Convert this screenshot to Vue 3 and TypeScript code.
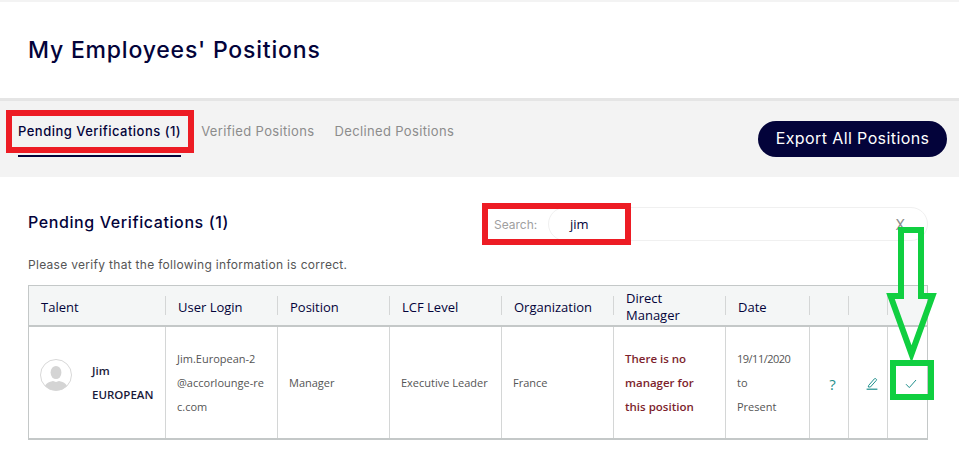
<script setup lang="ts">
const tabs = [
  { label: 'Pending Verifications (1)', active: true },
  { label: 'Verified Positions', active: false },
  { label: 'Declined Positions', active: false },
]
const headers = ['Talent', 'User Login', 'Position', 'LCF Level', 'Organization', 'Direct Manager', 'Date', '', '', '']
</script>

<template>
  <div class="page">
    <header class="title-bar"><h1>My Employees' Positions</h1></header>

    <div class="tab-bar">
      <nav class="tabs">
        <span v-for="t in tabs" :key="t.label" class="tab" :class="{ active: t.active }">{{ t.label }}</span>
      </nav>
      <button class="export">Export All Positions</button>
    </div>

    <section class="content">
      <div class="head-row">
        <h2>Pending Verifications (1)</h2>
        <div class="search">
          <span class="search-label">Search:</span>
          <div class="search-box"><span class="search-value">jim</span><span class="clear">X</span></div>
        </div>
      </div>
      <p class="hint">Please verify that the following information is correct.</p>

      <div class="table">
        <div class="row header">
          <div v-for="(h, i) in headers" :key="i" class="th"><span>{{ h }}</span></div>
        </div>
        <div class="row body">
          <div class="td talent">
            <svg class="avatar" viewBox="0 0 32 32" width="32" height="32">
              <defs><clipPath id="av"><circle cx="16" cy="16" r="15.5" /></clipPath></defs>
              <circle cx="16" cy="16" r="15.5" fill="#fff" stroke="#d8d8d8" />
              <g clip-path="url(#av)" fill="#d4d4d4">
                <ellipse cx="16" cy="13.5" rx="5.4" ry="6.6" />
                <path d="M4 32c0-7 4-9 9-10l3 1 3-1c5 1 9 3 9 10z" />
              </g>
            </svg>
            <div class="name">Jim<br />EUROPEAN</div>
          </div>
          <div class="td light">Jim.European-2<br />@accorlounge-re<br />c.com</div>
          <div class="td light">Manager</div>
          <div class="td light">Executive Leader</div>
          <div class="td light">France</div>
          <div class="td warn">There is no manager for this position</div>
          <div class="td light"><div><span class="date">19/11/2020</span><br />to<br />Present</div></div>
          <div class="td icon q">?</div>
          <div class="td icon">
            <svg viewBox="0 0 12 13" width="12" height="13" fill="none" stroke="#1f8f8c" stroke-width="1">
              <path d="M2.5 8.6 8.4 1.8a.9.9 0 0 1 1.3-.1l.5.4a.9.9 0 0 1 .1 1.3L4.4 10H2.3z" />
              <path d="M.6 12.2h10.8" stroke-width="1.2" />
            </svg>
          </div>
          <div class="td icon">
            <svg viewBox="0 0 12 10" width="12" height="10" fill="none" stroke="#1f8f8c" stroke-width="1">
              <path d="M1 5.2 4.3 8.6 11 1" />
            </svg>
          </div>
        </div>
      </div>
    </section>

    <div class="mark red tab-mark"></div>
    <div class="mark red search-mark"></div>
    <div class="mark green check-mark"></div>
    <svg class="arrow" viewBox="0 0 60 140" width="60" height="140" fill="none" stroke="#10cf40" stroke-width="6">
      <path d="M16 3H36V69H47.5L26.5 127 5.5 69H16Z" stroke-miterlimit="10" />
    </svg>
  </div>
</template>

<style scoped>
.page {
  position: relative;
  width: 959px;
  height: 457px;
  overflow: hidden;
  background: #fff;
  font-family: Inter, "Liberation Sans", sans-serif;
  box-sizing: border-box;
  padding-top: 2px;
}
.page::before {
  content: "";
  position: absolute;
  left: 0;
  right: 0;
  top: 0;
  height: 2px;
  background: #f3f3f3;
}
.title-bar {
  height: 96px;
  box-sizing: border-box;
  padding: 32px 28px 0;
}
h1 {
  margin: 0;
  font-size: 23px;
  line-height: 32px;
  font-weight: 500;
  letter-spacing: 0.8px;
  color: #03033a;
}
.tab-bar {
  height: 79px;
  box-sizing: border-box;
  border-top: 3px solid #e5e5e5;
  background: #f3f3f3;
  padding: 21px 12px 0 18px;
  display: flex;
  justify-content: space-between;
  align-items: flex-start;
}
.tabs { display: flex; gap: 20px; }
.tab {
  font-size: 13px;
  line-height: 18px;
  letter-spacing: 0.35px;
  color: #8c8c8c;
  height: 35px;
  box-sizing: border-box;
}
.tab.active {
  font-weight: 500;
  letter-spacing: 0.48px;
  color: #03033a;
  border-bottom: 2px solid #03033a;
}
.export {
  width: 189px;
  height: 36px;
  border: 0;
  border-radius: 18px;
  margin-top: -1px;
  padding: 0 0 2px;
  background: #03033a;
  color: #fff;
  font-family: inherit;
  font-size: 16px;
  letter-spacing: 0.4px;
}
.content { padding: 30px 31px 0 28px; }
.head-row {
  display: flex;
  align-items: center;
  height: 34px;
}
h2 {
  margin: -4px 0 0;
  width: 466px;
  font-size: 16px;
  font-weight: 500;
  letter-spacing: 0.6px;
  color: #03033a;
}
.search { display: flex; align-items: center; }
.search-label { width: 54px; font-size: 12px; color: #a0a0a0; }
.search-box {
  width: 380px;
  height: 34px;
  box-sizing: border-box;
  border: 1px solid #f0f0f0;
  border-radius: 17px;
  display: flex;
  justify-content: space-between;
  align-items: center;
  padding: 0 22px 0 21px;
}
.search-value { font: 13px "Open Sans", sans-serif; color: #03033a; }
.clear { font-size: 14px; color: #8c8c8c; }
.hint {
  margin: 15px 0 0;
  font-size: 12px;
  line-height: 18px;
  letter-spacing: 0.3px;
  color: #555;
}
.table {
  margin-top: 11px;
  width: 900px;
  height: 155px;
  box-sizing: border-box;
  border: 1px solid #c4c8c8;
  border-bottom-width: 2px;
  font-family: "Open Sans", sans-serif;
}
.row {
  display: grid;
  grid-template-columns: 137px 112px 112px 112px 112px 112px 84px 39px 39px 39px;
}
.header {
  height: 41px;
  grid-template-rows: 39px;
  background: #f4f6f6;
  border-bottom: 2px solid #c4c8c8;
  box-sizing: border-box;
}
.th {
  display: flex;
  align-items: center;
  margin: 10px 0;
  border-right: 1px solid #d4d6d6;
  padding: 4px 0 0 12px;
  font-size: 13px;
  line-height: 17px;
  font-weight: 500;
  color: #03033a;
}
.th:last-child { border-right: 0; }
.th:nth-child(6) { padding-top: 2px; }
.th:nth-child(6) span { width: 70px; }
.body { height: 111px; }
.td {
  border-right: 1px solid #d4d6d6;
  display: flex;
  align-items: center;
  padding: 0 6px 0 11px;
  font-size: 12px;
  line-height: 24px;
}
.td:last-child { border-right: 0; }
.light { color: #555; font-size: 11px; }
.date { letter-spacing: -0.5px; }
.talent { padding: 1px 6px 0 11px; gap: 20px; }
.avatar { flex: none; margin-top: -17px; }
.name { font-weight: 600; color: #1a1a3a; font-size: 11.5px; }
.warn { color: #7d1f2d; font-weight: 600; font-size: 11.5px; padding: 1px 14px 0 11px; }
.icon { justify-content: center; padding: 2px 0 0 7px; color: #1f8f8c; }
.q { font-size: 15px; }
.mark { position: absolute; box-sizing: border-box; border-width: 6px; border-style: solid; }
.red { border-color: #ed1c24; }
.green { border-color: #10cf40; }
.tab-mark { left: 6px; top: 110px; width: 188px; height: 43px; }
.search-mark { left: 482px; top: 203px; width: 149px; height: 42px; }
.check-mark { left: 890px; top: 360px; width: 44px; height: 40px; }
.arrow { position: absolute; left: 885px; top: 227px; }
</style>
